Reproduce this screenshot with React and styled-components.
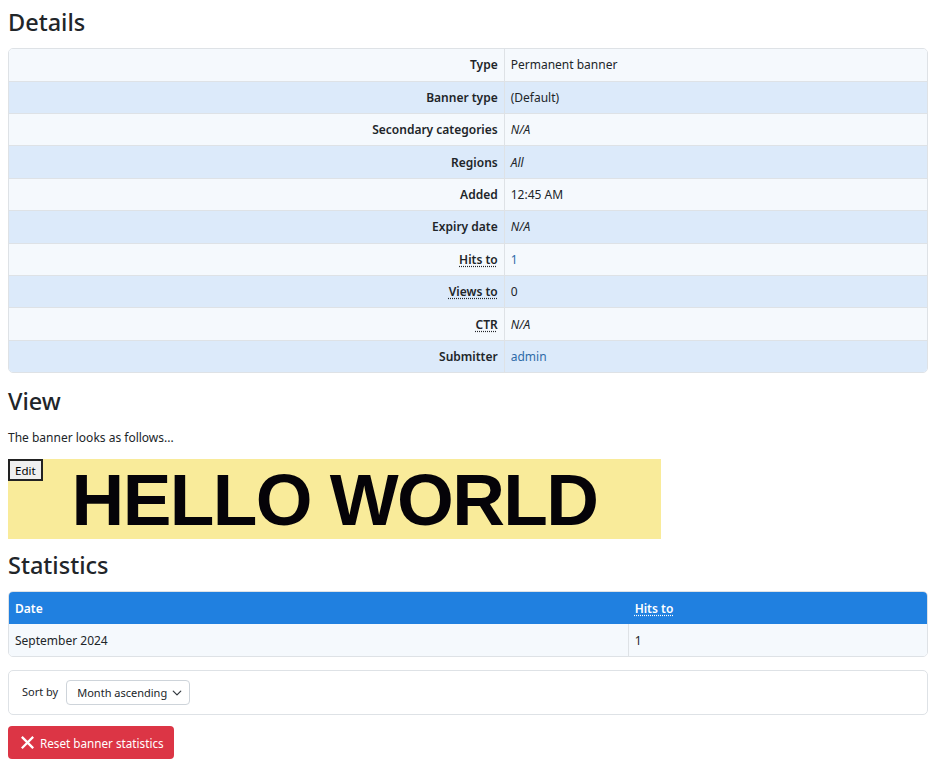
import React from 'react';
import styled, { createGlobalStyle } from 'styled-components';

const GlobalStyle = createGlobalStyle`
  body {
    margin: 8px;
    font-family: "Noto Sans", "Open Sans", sans-serif;
    font-size: 12px;
    color: #212529;
    background: #fff;
  }
`;

const details = [
  { label: 'Type', value: 'Permanent banner' },
  { label: 'Banner type', value: '(Default)' },
  { label: 'Secondary categories', value: 'N/A', em: true },
  { label: 'Regions', value: 'All', em: true },
  { label: 'Added', value: '12:45 AM' },
  { label: 'Expiry date', value: 'N/A', em: true },
  { label: 'Hits to', value: '1', abbr: true, link: true },
  { label: 'Views to', value: '0', abbr: true },
  { label: 'CTR', value: 'N/A', abbr: true, em: true },
  { label: 'Submitter', value: 'admin', link: true },
];

const App = () => {
  return (
    <Page>
      <GlobalStyle />
      <Heading>Details</Heading>
      <Table>
        <tbody>
          {details.map(({ label, value, em, abbr, link }, i) => (
            <Row key={label} $alt={i % 2 === 1}>
              <LabelCell>{abbr ? <Abbr>{label}</Abbr> : label}</LabelCell>
              <ValueCell>
                {link ? <Link href="#">{value}</Link> : em ? <em>{value}</em> : value}
              </ValueCell>
            </Row>
          ))}
        </tbody>
      </Table>

      <Heading>View</Heading>
      <Para>The banner looks as follows...</Para>
      <BannerWrap>
        <EditButton>Edit</EditButton>
        <Banner>HELLO WORLD</Banner>
      </BannerWrap>

      <Heading>Statistics</Heading>
      <Table $tight>
        <thead>
          <tr>
            <HeadCell>Date</HeadCell>
            <HeadCell><Abbr $light>Hits to</Abbr></HeadCell>
          </tr>
        </thead>
        <tbody>
          <Row>
            <StatCell>September 2024</StatCell>
            <StatCell>1</StatCell>
          </Row>
        </tbody>
      </Table>

      <SortBox>
        <SortLabel>Sort by</SortLabel>
        <SelectWrap>
          <Select defaultValue="asc">
            <option value="asc">Month ascending</option>
            <option value="desc">Month descending</option>
          </Select>
          <Chevron width="10" height="10" viewBox="0 0 16 16">
            <path d="M2 5 L8 11 L14 5" fill="none" stroke="#343a40" strokeWidth="2" strokeLinecap="round" strokeLinejoin="round" />
          </Chevron>
        </SelectWrap>
      </SortBox>

      <DangerButton>
        <svg width="13" height="13" viewBox="0 0 16 16">
          <path d="M2 2 L14 14 M14 2 L2 14" stroke="#fff" strokeWidth="2.8" strokeLinecap="square" />
        </svg>
        Reset banner statistics
      </DangerButton>
    </Page>
  );
};

export default App;

const Page = styled.div`
  width: 920px;
`;

const Heading = styled.h2`
  font-size: 23.5px;
  font-weight: 500;
  line-height: 1.2;
  margin: 0 0 12px;
  color: #212529;
`;

const Table = styled.table`
  width: 100%;
  border-collapse: separate;
  border-spacing: 0;
  border: 1px solid #dee2e6;
  border-radius: 5px;
  overflow: hidden;
  margin-bottom: ${p => (p.$tight ? '13px' : '14px')};
`;

const Row = styled.tr`
  background: ${p => (p.$alt ? '#dceafa' : '#f5f9fd')};
  td {
    border-top: 1px solid #dee2e6;
  }
  &:first-child td {
    border-top: none;
  }
`;

const LabelCell = styled.td`
  width: 54%;
  text-align: right;
  font-weight: 600;
  padding: 0 6px;
  height: 31.4px;
  border-right: 1px solid #dee2e6;
`;

const ValueCell = styled.td`
  padding: 0 6px;
  height: 31.4px;
`;

const Abbr = styled.abbr`
  text-decoration: underline dotted;
  text-underline-offset: 2px;
  cursor: help;
  color: ${p => (p.$light ? '#fff' : 'inherit')};
`;

const Link = styled.a`
  color: #2e6aa8;
  text-decoration: none;
`;

const Para = styled.p`
  margin: 0 0 13px;
  padding-top: 2px;
`;

const BannerWrap = styled.div`
  position: relative;
  width: 653px;
  margin-bottom: 12px;
`;

const EditButton = styled.button`
  position: absolute;
  top: 0;
  left: 0;
  font-family: "Noto Sans", sans-serif;
  font-size: 11.5px;
  height: 22px;
  padding: 0 5px;
  background: #efefef;
  border: 2px solid #222;
  color: #000;
`;

const Banner = styled.div`
  height: 80px;
  background: #f9eb9a;
  font-family: "Liberation Sans", Arial, sans-serif;
  font-weight: 700;
  font-size: 73px;
  letter-spacing: -1.6px;
  line-height: 82px;
  text-align: center;
  color: #050308;
`;

const HeadCell = styled.th`
  background: #2080e0;
  color: #fff;
  text-align: left;
  font-weight: 600;
  padding: 0 6px;
  height: 32px;
  &:first-child {
    width: 67.5%;
  }
`;

const StatCell = styled.td`
  padding: 0 6px;
  height: 32px;
  &:first-child {
    border-right: 1px solid #dee2e6;
  }
`;

const SortBox = styled.div`
  display: flex;
  align-items: center;
  gap: 8px;
  border: 1px solid #dee2e6;
  border-radius: 5px;
  padding: 9px 13px;
  margin-bottom: 11px;
`;

const SortLabel = styled.span`
  font-size: 11px;
  margin-top: -3px;
`;

const SelectWrap = styled.div`
  position: relative;
  display: flex;
`;

const Select = styled.select`
  appearance: none;
  font-family: "Noto Sans", sans-serif;
  font-size: 11px;
  color: #212529;
  width: 124px;
  height: 25px;
  padding: 0 20px 0 10px;
  border: 1px solid #ced4da;
  border-radius: 4px;
  background: #fff;
`;

const Chevron = styled.svg`
  position: absolute;
  right: 8px;
  top: 8px;
  pointer-events: none;
`;

const DangerButton = styled.button`
  display: inline-flex;
  align-items: center;
  gap: 6px;
  background: #dc3545;
  color: #fff;
  border: none;
  border-radius: 4px;
  height: 33px;
  padding: 0 10px 0 13px;
  font-family: "Noto Sans", sans-serif;
  font-size: 11.7px;
`;
